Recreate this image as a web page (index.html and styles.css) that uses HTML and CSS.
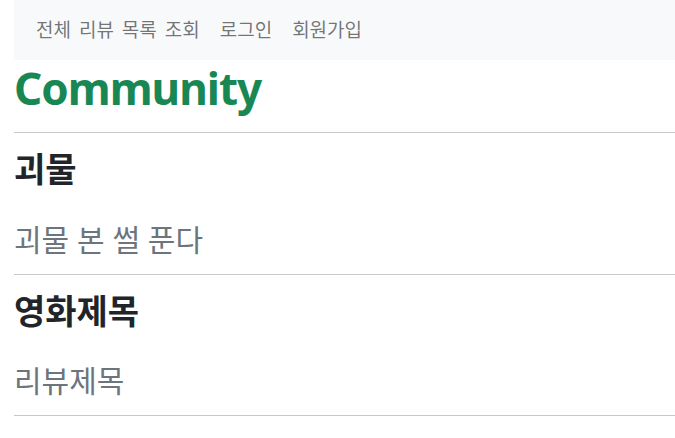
FILE: index.html
```html
<!DOCTYPE html>
<html lang="ko">
<head>
<meta charset="utf-8">
<title>Community</title>
<link rel="stylesheet" href="styles.css">
</head>
<body>
<div class="page">
  <nav class="navbar">
    <a class="nav-link" href="#">전체 리뷰 목록 조회</a>
    <a class="nav-link" href="#">로그인</a>
    <a class="nav-link" href="#">회원가입</a>
  </nav>
  <h1 class="brand">Community</h1>
  <hr class="rule">
  <article class="review">
    <h2 class="movie">괴물</h2>
    <p class="review-title">괴물 본 썰 푼다</p>
  </article>
  <hr class="rule">
  <article class="review">
    <h2 class="movie">영화제목</h2>
    <p class="review-title">리뷰제목</p>
  </article>
  <hr class="rule">
</div>
</body>
</html>
```

FILE: styles.css
```css
* { box-sizing: border-box; }
body {
  margin: 0;
  font-family: "Noto Sans", "Noto Sans CJK KR", sans-serif;
  color: #212529;
  background: #fff;
}
.page {
  padding-left: 14px;
}
.navbar {
  display: flex;
  align-items: center;
  height: 60px;
  padding: 0 12px;
  background: #f8f9fa;
}
.nav-link {
  padding: 0 10px;
  font-size: 19px;
  line-height: 24px;
  word-spacing: 3px;
  color: rgba(0, 0, 0, 0.55);
  text-decoration: none;
}
.brand {
  margin: 0;
  font-size: 44px;
  line-height: 1.2;
  font-weight: 700;
  letter-spacing: -1px;
  color: #198754;
  padding: 2px 0 17px;
}
.rule {
  margin: 0;
  border: 0;
  border-top: 1px solid #c8c9ca;
}
.review {
  padding: 16px 0;
}
.movie {
  margin: 0 0 32px;
  font-size: 34px;
  line-height: 1.2;
  font-weight: 700;
}
.review-title {
  margin: 0;
  font-size: 30px;
  line-height: 1.2;
  color: #6c757d;
}
```
